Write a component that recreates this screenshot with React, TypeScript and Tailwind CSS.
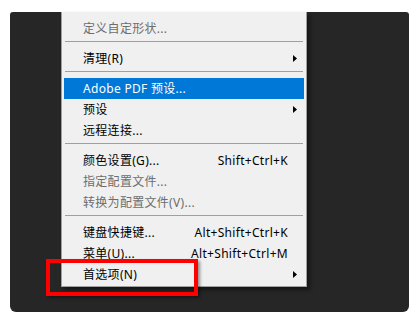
import React from 'react'

type Item =
  | { kind: 'sep' }
  | {
      kind: 'item'
      label: string
      shortcut?: string
      sub?: boolean
      disabled?: boolean
      active?: boolean
    }

const items: Item[] = [
  { kind: 'item', label: '定义自定形状...', disabled: true },
  { kind: 'sep' },
  { kind: 'item', label: '清理(R)', sub: true },
  { kind: 'sep' },
  { kind: 'item', label: 'Adobe PDF 预设...', active: true },
  { kind: 'item', label: '预设', sub: true },
  { kind: 'item', label: '远程连接...' },
  { kind: 'sep' },
  { kind: 'item', label: '颜色设置(G)...', shortcut: 'Shift+Ctrl+K' },
  { kind: 'item', label: '指定配置文件...', disabled: true },
  { kind: 'item', label: '转换为配置文件(V)...', disabled: true },
  { kind: 'sep' },
  { kind: 'item', label: '键盘快捷键...', shortcut: 'Alt+Shift+Ctrl+K' },
  { kind: 'item', label: '菜单(U)...', shortcut: 'Alt+Shift+Ctrl+M' },
  { kind: 'item', label: '首选项(N)', sub: true },
]

function Arrow({ light }: { light?: boolean }) {
  return (
    <svg width="4" height="7" viewBox="0 0 4 7">
      <polygon points="0,0 4,3.5 0,7" fill={light ? '#ffffff' : '#000000'} />
    </svg>
  )
}

export default function App() {
  return (
    <div
      className="w-[418px] h-[317px] bg-white pt-[12px] pl-[10px] overflow-hidden"
      style={{ fontFamily: '"Noto Sans", "Noto Sans CJK SC", sans-serif' }}
    >
      <div className="relative w-[399px] h-[300px] bg-[#262626] rounded-[6px] rounded-t-[3px]">
        <div className="absolute left-[51px] top-0 w-[246px] bg-[#f0f0f0] border-x border-b border-[#a0a0a0] pt-[6px] pb-[1px] shadow-[3px_3px_4px_rgba(0,0,0,0.45)]">
          {items.map((it, i) =>
            it.kind === 'sep' ? (
              <div key={i} className="h-[9px] pt-[2px] px-[3px]">
                <div className="h-px bg-[#a0a0a0]" />
              </div>
            ) : (
              <div
                key={i}
                className={`mx-[2px] h-[21px] flex items-center pl-[19px] pr-[7px] text-[12px] leading-none tracking-[0.3px] ${
                  it.active
                    ? 'bg-[#0078d7] text-white'
                    : it.disabled
                    ? 'text-[#6d6d6d]'
                    : 'text-black'
                }`}
              >
                <span className="flex-1 whitespace-nowrap">{it.label}</span>
                {it.shortcut && <span className="whitespace-nowrap">{it.shortcut}</span>}
                <span className="w-[9px] flex justify-end">{it.sub && <Arrow light={it.active} />}</span>
              </div>
            )
          )}
        </div>
        <div className="absolute left-[36px] top-[247px] w-[152px] h-[37px] border-[4px] border-[#ff0000] shadow-[2px_2px_3px_rgba(0,0,0,0.4)]" />
      </div>
    </div>
  )
}
